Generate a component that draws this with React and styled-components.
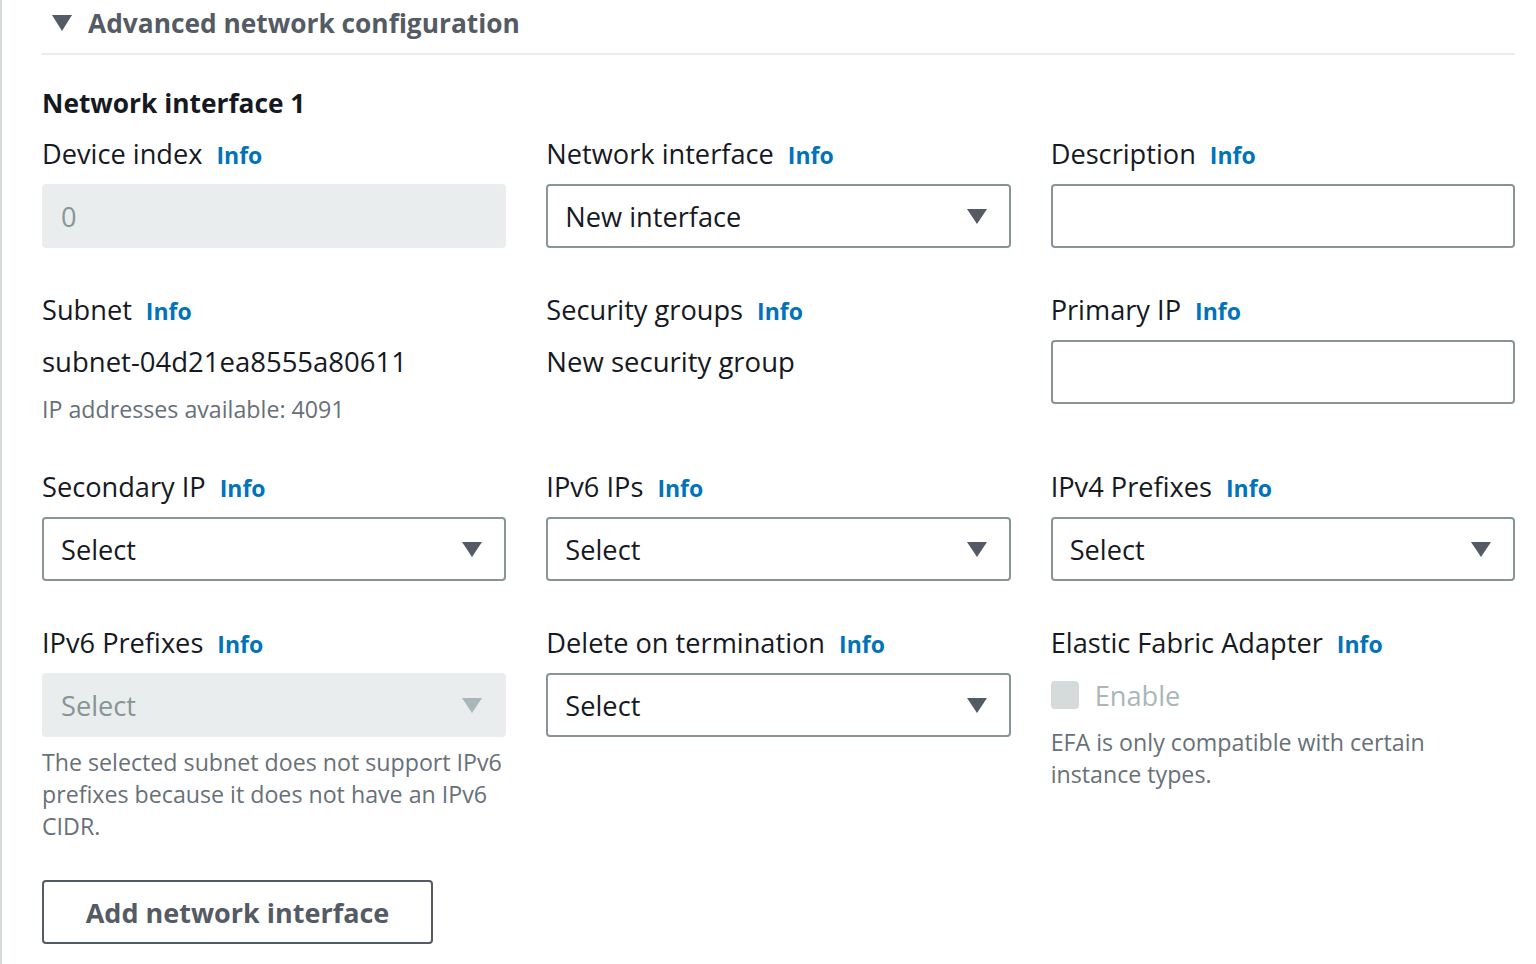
import React from 'react';
import styled, { createGlobalStyle } from 'styled-components';

const GlobalStyle = createGlobalStyle`
  html, body {
    margin: 0;
    padding: 0;
    background: #ffffff;
  }
  body {
    font-family: "Open Sans", "Noto Sans", Arial, sans-serif;
    color: #16191f;
  }
  * {
    box-sizing: border-box;
  }
`;

const Page = styled.div`
  min-height: 964px;
  border-left: 2px solid #d5dbdb;
  padding: 0 21px 0 40px;
`;

const Header = styled.div`
  display: flex;
  align-items: center;
  height: 55px;
  padding-bottom: 7px;
  border-bottom: 2px solid #eaeded;
  gap: 16px;
  padding-left: 10px;
`;

const HeaderTitle = styled.span`
  font-size: 26.3px;
  font-weight: 700;
  color: #545b64;
`;

const SectionTitle = styled.h2`
  margin: 26px 0 7px;
  font-size: 26.3px;
  line-height: 44px;
  font-weight: 700;
  color: #16191f;
`;

const Grid = styled.div`
  display: grid;
  grid-template-columns: repeat(3, 1fr);
  column-gap: 40px;
  row-gap: 40px;
`;

const Field = styled.div`
  display: flex;
  flex-direction: column;
  min-width: 0;
`;

const Label = styled.div`
  display: flex;
  align-items: baseline;
  gap: 14px;
  font-size: 27.2px;
  line-height: 44px;
  margin-bottom: 7px;
  color: #16191f;
`;

const InfoLink = styled.a`
  font-size: 23px;
  font-weight: 700;
  color: #0073bb;
  text-decoration: none;
`;

const Box = styled.div`
  display: flex;
  align-items: center;
  justify-content: space-between;
  height: 64px;
  padding: 0 22px 0 17px;
  border-radius: 4px;
  font-size: 27.2px;
  border: 2px solid ${(p) => (p.disabled ? '#eaeded' : '#879596')};
  background: ${(p) => (p.disabled ? '#eaeded' : '#ffffff')};
  color: ${(p) => (p.disabled ? '#879596' : '#16191f')};
`;

const Value = styled.div`
  font-size: 27.5px;
  line-height: 44px;
  color: #16191f;
`;

const Hint = styled.div`
  font-size: 23.2px;
  line-height: 32px;
  color: #687078;
  margin-top: ${(p) => p.gap || 0}px;
`;

const CheckRow = styled.div`
  display: flex;
  align-items: center;
  gap: 16px;
  height: 44px;
`;

const CheckBox = styled.span`
  width: 28px;
  height: 28px;
  border-radius: 4px;
  background: #d5dbdb;
`;

const CheckText = styled.span`
  font-size: 27.2px;
  color: #aab7b8;
`;

const AddButton = styled.button`
  margin-top: 38px;
  height: 64px;
  width: 391px;
  border: 2px solid #545b64;
  border-radius: 4px;
  background: #ffffff;
  font-family: inherit;
  font-size: 27px;
  font-weight: 700;
  color: #545b64;
`;

const Caret = ({ color = '#545b64', w = 20, h = 15 }) => (
  <svg width={w} height={h} viewBox="0 0 20 15" preserveAspectRatio="none">
    <polygon points="0,0 20,0 10,15" fill={color} />
  </svg>
);

const FieldLabel = ({ children }) => (
  <Label>
    {children}
    <InfoLink href="#">Info</InfoLink>
  </Label>
);

const SelectBox = ({ value, disabled }) => (
  <Box disabled={disabled}>
    <span>{value}</span>
    <Caret color={disabled ? '#aab7b8' : '#545b64'} />
  </Box>
);

export default function App() {
  return (
    <>
      <GlobalStyle />
      <Page>
        <Header>
          <Caret w={20} h={16} />
          <HeaderTitle>Advanced network configuration</HeaderTitle>
        </Header>
        <SectionTitle>Network interface 1</SectionTitle>
        <Grid>
          <Field>
            <FieldLabel>Device index</FieldLabel>
            <Box disabled>0</Box>
          </Field>
          <Field>
            <FieldLabel>Network interface</FieldLabel>
            <SelectBox value="New interface" />
          </Field>
          <Field>
            <FieldLabel>Description</FieldLabel>
            <Box />
          </Field>

          <Field>
            <FieldLabel>Subnet</FieldLabel>
            <Value>subnet-04d21ea8555a80611</Value>
            <Hint gap={9}>IP addresses available: 4091</Hint>
          </Field>
          <Field>
            <FieldLabel>Security groups</FieldLabel>
            <Value>New security group</Value>
          </Field>
          <Field>
            <FieldLabel>Primary IP</FieldLabel>
            <Box />
          </Field>

          <Field>
            <FieldLabel>Secondary IP</FieldLabel>
            <SelectBox value="Select" />
          </Field>
          <Field>
            <FieldLabel>IPv6 IPs</FieldLabel>
            <SelectBox value="Select" />
          </Field>
          <Field>
            <FieldLabel>IPv4 Prefixes</FieldLabel>
            <SelectBox value="Select" />
          </Field>

          <Field>
            <FieldLabel>IPv6 Prefixes</FieldLabel>
            <SelectBox value="Select" disabled />
            <Hint gap={9}>
              The selected subnet does not support IPv6 prefixes because it does not have an IPv6 CIDR.
            </Hint>
          </Field>
          <Field>
            <FieldLabel>Delete on termination</FieldLabel>
            <SelectBox value="Select" />
          </Field>
          <Field>
            <FieldLabel>Elastic Fabric Adapter</FieldLabel>
            <CheckRow>
              <CheckBox />
              <CheckText>Enable</CheckText>
            </CheckRow>
            <Hint gap={9}>EFA is only compatible with certain instance types.</Hint>
          </Field>
        </Grid>
        <AddButton>Add network interface</AddButton>
      </Page>
    </>
  );
}
